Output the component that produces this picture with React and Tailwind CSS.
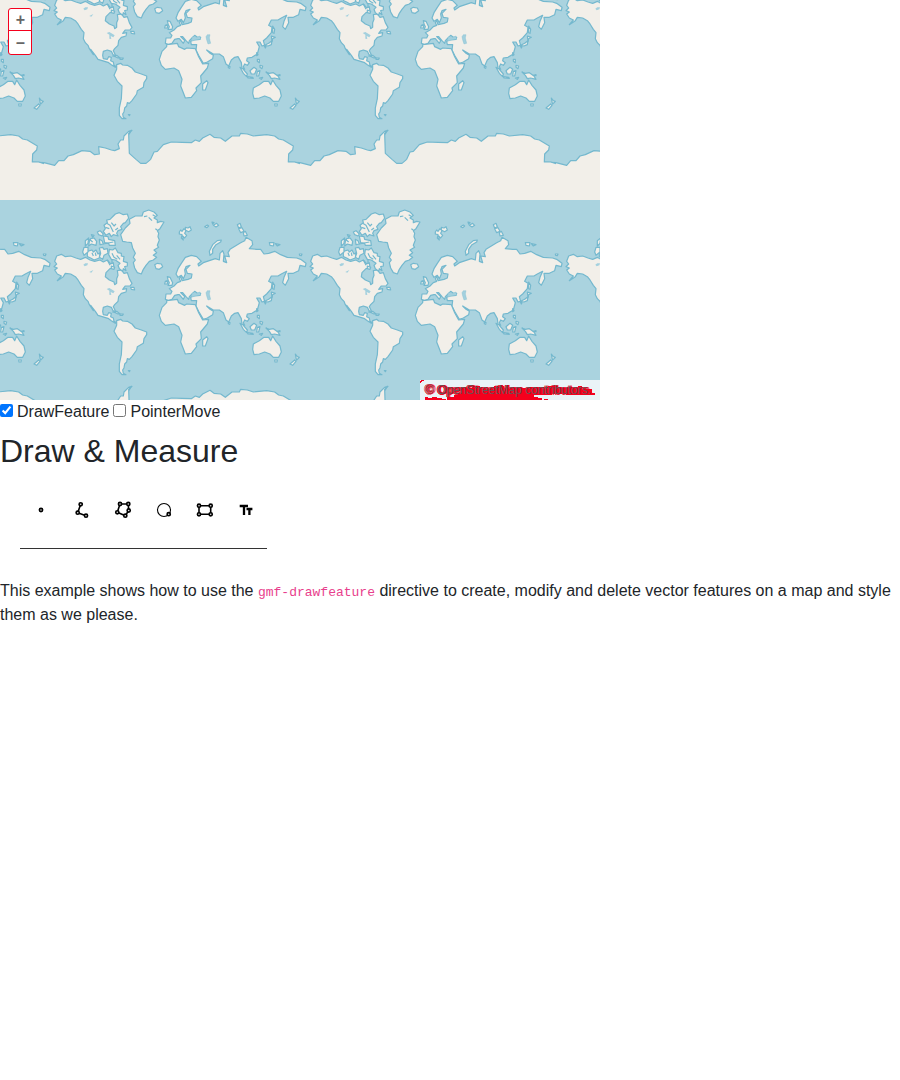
import React from "react";

const NORTH = [
  "M14,184 L20,168 L34,163 L46,170 L62,168 L78,174 L92,178 L106,172 L120,180 L134,184 L150,180 L160,186 L172,180 L182,192 L190,188 L192,204 L180,206 L168,218 L166,230 L178,240 L192,246 L194,254 L200,250 L200,236 L204,226 L202,212 L214,210 L222,220 L232,218 L238,236 L246,250 L240,258 L226,258 L218,268 L230,266 L228,276 L214,280 L206,290 L204,304 L194,314 L190,320 L196,332 L190,334 L184,322 L172,318 L160,322 L158,334 L160,344 L172,346 L176,338 L184,340 L182,350 L190,354 L192,364 L200,368 L196,370 L184,362 L176,356 L164,352 L144,346 L136,334 L122,316 L130,332 L118,314 L114,304 L106,296 L100,284 L102,266 L94,256 L84,240 L76,230 L62,222 L46,220 L40,230 L22,242 L34,228 L22,222 L14,210 L22,204 L12,200 L20,192 Z",
  "M200,362 L212,358 L218,363 L232,364 L246,372 L256,384 L274,390 L290,396 L290,404 L282,416 L280,430 L262,440 L260,450 L246,470 L238,478 L232,476 L230,486 L224,492 L222,504 L218,510 L220,520 L228,524 L216,524 L208,514 L208,492 L214,464 L216,426 L202,412 L192,394 L200,376 Z",
  "M218,124 L212,104 L226,84 L240,70 L238,58 L256,48 L276,48 L280,36 L296,30 L312,36 L322,46 L312,54 L322,60 L322,68 L332,64 L342,66 L330,86 L322,92 L326,100 L324,110 L328,120 L322,136 L326,142 L312,150 L320,158 L310,166 L320,172 L310,180 L298,184 L288,196 L280,208 L274,222 L262,218 L254,204 L250,188 L256,180 L250,172 L256,160 L248,144 L244,128 L230,126 Z",
  "M162,76 L172,68 L170,60 L180,58 L190,48 L196,42 L208,38 L220,44 L232,42 L236,54 L226,68 L220,70 L212,80 L216,88 L204,92 L200,100 L204,108 L190,104 L184,110 L178,100 L168,106 L160,94 L166,86 Z",
  "M178,148 L188,150 L196,144 L204,158 L214,160 L214,168 L222,170 L220,184 L232,188 L232,198 L224,200 L228,212 L220,206 L218,214 L208,206 L204,196 L210,190 L196,180 L184,178 L176,164 Z",
  "M112,154 L126,150 L130,156 L138,150 L144,162 L150,158 L148,174 L132,180 L122,174 L112,170 Z",
  "M102,142 L114,142 L114,156 L102,166 L98,156 Z",
  "M122,116 L132,114 L140,124 L138,136 L124,132 L116,138 L118,124 Z",
  "M106,122 L116,114 L114,130 L106,138 Z",
  "M148,144 L158,142 L162,148 L172,146 L174,160 L162,166 L158,178 L148,172 L152,160 Z",
  "M142,96 L150,92 L160,102 L156,108 L146,104 Z",
  "M160,108 L174,110 L176,118 L194,122 L196,136 L178,136 L176,130 L164,128 Z",
  "M148,118 L156,122 L160,132 L150,134 Z",
  "M124,104 L132,106 L128,112 Z",
  "M184,198 L194,202 L192,208 L184,206 Z",
  "M314,194 L322,190 L334,192 L338,200 L328,208 L318,206 Z",
  "M242,262 L252,262 L254,270 L244,268 Z",
  "M188,336 L200,334 L210,342 L204,342 L196,338 Z",
  "M210,342 L220,342 L218,346 L210,346 Z",
  "M235,512 L240,512 L238,515 Z",
  "M230,570 L240,562 L244,559 L238,570 Z",
];

const EAST = [
  "M46,298 L48,282 L62,282 L66,274 L58,266 L72,258 L82,248 L92,244 L88,236 L92,230 L96,242 L114,238 L124,234 L126,222 L112,220 L108,208 L120,196 L108,200 L104,210 L106,222 L100,236 L94,226 L84,232 L78,222 L84,206 L94,190 L106,172 L124,166 L140,170 L154,184 L144,192 L146,198 L160,188 L178,182 L196,176 L208,180 L210,160 L218,152 L222,162 L220,184 L230,188 L224,168 L238,170 L234,158 L240,148 L256,138 L272,128 L284,122 L288,112 L306,122 L308,134 L298,146 L320,148 L332,148 L342,162 L356,160 L374,154 L392,164 L412,172 L440,174 L452,178 L468,190 L466,200 L450,196 L446,212 L430,220 L414,220 L416,236 L406,256 L398,248 L402,232 L410,214 L394,222 L384,228 L364,228 L356,244 L366,250 L364,266 L350,282 L340,290 L344,304 L336,306 L330,294 L320,294 L328,308 L322,330 L306,340 L292,342 L290,350 L298,356 L292,364 L284,360 L280,368 L284,376 L276,372 L274,356 L264,338 L254,340 L244,348 L236,366 L228,360 L220,338 L208,330 L190,330 L170,318 L180,328 L190,334 L188,344 L172,354 L160,358 L148,338 L138,318 L140,302 L124,302 L122,292 L130,288 L150,286 L152,280 L142,280 L134,274 L126,282 L118,290 L116,298 L108,290 L98,278 L92,278 L104,290 L100,298 L88,284 L84,284 L74,286 L66,298 L56,302 Z",
  "M50,302 L82,298 L86,308 L104,316 L110,312 L136,314 L146,338 L158,360 L176,358 L172,372 L152,396 L154,416 L138,432 L140,440 L124,460 L106,462 L100,446 L92,426 L96,406 L86,380 L72,372 L46,376 L34,364 L28,346 L36,322 L50,308 Z",
  "M310,432 L328,422 L342,412 L356,412 L362,422 L368,408 L378,424 L390,438 L394,456 L386,472 L370,472 L360,462 L344,456 L328,462 L312,464 L308,448 Z",
  "M158,420 L170,410 L174,416 L166,438 L158,438 Z",
  "M374,480 L382,480 L381,486 L375,486 Z",
  "M436,462 L442,470 L448,472 L440,480 L438,474 Z",
  "M434,480 L438,484 L428,496 L420,492 Z",
  "M52,230 L60,232 L68,248 L66,256 L54,256 L58,248 L54,240 Z",
  "M46,244 L52,242 L52,252 L44,252 Z",
  "M180,166 L178,154 L188,134 L202,122 L214,120 L212,126 L198,134 L188,148 L188,160 Z",
  "M88,96 L92,90 L96,94 L102,86 L108,92 L104,100 L110,106 L104,114 L98,108 L100,120 L94,114 L96,104 L88,102 Z",
  "M106,82 L114,84 L120,80 L124,90 L116,95 L106,90 Z",
  "M164,80 L172,75 L176,78 L170,83 Z",
  "M190,76 L200,70 L206,76 L198,81 Z",
  "M186,66 L192,68 L188,72 Z",
  "M262,74 L270,70 L274,80 L266,84 Z",
  "M266,86 L276,83 L282,94 L272,98 Z",
  "M280,98 L286,94 L292,106 L282,108 Z",
  "M358,128 L372,128 L370,138 L360,136 Z",
  "M376,131 L390,134 L382,138 Z",
  "M448,162 L456,162 L454,167 L449,166 Z",
  "M368,246 L374,256 L372,268 L368,266 Z",
  "M364,276 L376,280 L368,284 L366,292 Z",
  "M366,290 L364,302 L354,306 L344,304 L356,298 Z",
  "M342,304 L348,308 L346,312 Z",
  "M270,370 L278,374 L292,390 L290,398 L280,388 Z",
  "M292,398 L308,400 L310,403 L294,402 Z",
  "M300,380 L312,370 L320,376 L314,390 L304,390 Z",
  "M322,382 L330,380 L326,396 L320,396 Z",
  "M322,346 L328,346 L328,356 L322,352 Z",
  "M330,364 L338,366 L336,374 L330,370 Z",
  "M348,384 L358,388 L370,386 L384,396 L390,406 L374,402 L364,404 L358,394 Z",
  "M382,394 L390,392 L390,395 Z",
  "M328,402 L338,400 L334,406 Z",
  "M235,366 L240,368 L239,373 L235,371 Z",
  "M320,326 L324,332 L320,335 Z",
];

const ANTARCTICA_COAST =
  "M96,216 L132,218 L164,226 L176,212 L192,212 L204,198 L220,194 L246,182 L270,184 L284,194 L298,192 L296,170 L316,174 L334,180 L344,182 L358,176 L354,162 L362,150 L370,150 L372,138 L386,124 L396,121 L386,130 L388,190 L408,208 L422,220 L438,220 L452,208 L462,186 L472,184 L490,164 L514,156 L546,157 L574,158 L586,150 L598,154 L608,144 L630,133 L642,142 L662,144 L676,154 L696,138 L718,138 L722,130 L742,132 L760,138 L800,134 L824,138 L836,147 L850,150 L880,168 L878,180 L866,192 L865,216 L884,216 L900,221";
const ANTARCTICA_LAND = ANTARCTICA_COAST + " L900,330 L96,330 Z";

const LAKES = [
  "M100,194 L106,190 L114,190 L112,196 L104,199 Z",
  "M118,216 L130,210 L124,218 Z",
  "M170,267 L178,264 L188,270 L194,274 L190,280 L182,276 L184,285 L178,284 L178,272 Z",
];
const INLAND_SEAS = [
  "M168,278 L172,272 L180,272 L178,282 L182,298 L174,300 L170,288 Z",
  "M124,292 L126,280 L134,276 L140,280 L150,276 L152,286 L136,288 Z",
];
const INLETS =
  "M170,70 L180,76 L190,96 M184,68 L192,78 L198,72 M166,82 L178,86 M204,84 L196,90 M282,50 L292,48 M296,52 L306,62 M308,44 L318,50 M316,86 L322,90 M186,160 L192,172 L202,178 M200,166 L210,178 M126,158 L130,168 M136,158 L138,168 M118,118 L128,126 M160,132 L190,126 M172,180 L180,196 M186,178 L186,192";

function World({ x, y }) {
  return (
    <g transform={`translate(${x} ${y})`}>
      <g fill="#f2efe9" stroke="#74b8ce" strokeWidth="3.6" strokeLinejoin="round">
        <g transform="translate(6 0) scale(0.33333)">
          {NORTH.map((d) => (
            <path key={d} d={d} />
          ))}
          <path d={INLETS} fill="none" />
          <g fill="#a3d0de" stroke="none">
            {LAKES.map((d) => (
              <path key={d} d={d} />
            ))}
          </g>
        </g>
        <g transform="translate(106 0) scale(0.33333)">
          {EAST.map((d) => (
            <path key={d} d={d} />
          ))}
          <g fill="#a3d0de" strokeWidth="1">
            {INLAND_SEAS.map((d) => (
              <path key={d} d={d} />
            ))}
          </g>
        </g>
      </g>
      <g transform="translate(-44 146) scale(0.33333)">
        <path d={ANTARCTICA_LAND} fill="#f2efe9" />
        <path d={ANTARCTICA_COAST} fill="none" stroke="#74b8ce" strokeWidth="3.6" strokeLinejoin="round" />
      </g>
    </g>
  );
}

function MapView() {
  return (
    <div className="relative h-[400px] w-full max-w-[600px] overflow-hidden bg-[#aad3df]">
      <svg
        className="block h-full w-full"
        viewBox="0 0 600 400"
        preserveAspectRatio="xMinYMin slice"
        role="img"
        aria-label="World map"
      >
        {[-56, 200].map((y) =>
          [556, 300, 44, -212].map((x) => <World key={`${x}:${y}`} x={x} y={y} />)
        )}
      </svg>
      <div className="absolute left-2 top-2 flex w-6 flex-col divide-y divide-[#f5001d] overflow-hidden rounded-[3px] border border-[#f5001d] bg-white text-[16px] font-bold leading-none text-[#666]">
        <button type="button" aria-label="Zoom in" className="flex h-[22px] items-center justify-center pl-px">
          +
        </button>
        <button type="button" aria-label="Zoom out" className="flex h-[23px] items-center justify-center pl-px">
          –
        </button>
      </div>
      <div className="absolute bottom-0 right-0 h-5 w-[180px] bg-[#eaf3f7] px-[5px]">
        <svg className="absolute left-0 top-0 h-5 w-[180px]" viewBox="0 0 180 20" aria-hidden="true">
          <path
            d="M27,20 V17 H34 V15 H38 V13 H42 V8 H52 V6 H60 V9 H74 V6 H84 V8 H110 V7 H120 V9 H128 V6 H138 V8 H158 V6 H162 V9 H172 V13 H175 V15 H146 V14 H132 V15 H114 V17 H118 V18 H122 V20 Z M0,1 H1 V0 H4 V1 H2 V2 H1 V3 H0 Z M5,17 H8 V18 H12 V17 H17 V18 H22 V19 H26 V20 H5 Z M124,19 H128 V20 H124 Z"
            fill="#f5001d"
          />
        </svg>
        <a
          href="#copyright"
          className="relative block whitespace-nowrap text-[12px] leading-5 text-[#6a5256] [text-shadow:-1px_0_#f5001d,1px_0_#f5001d,0_1px_#f5001d,2px_0_#f5001d]"
        >
          © OpenStreetMap contributors.
        </a>
      </div>
    </div>
  );
}

function Node({ x, y }) {
  return <circle cx={x} cy={y} r="1.6" fill="#ddd" />;
}

const TOOLS = [
  { name: "Point", path: "", nodes: [[0, 0]] },
  {
    name: "Line",
    path: "M-1.3,-5.7 L-4.3,2.7 L4,5.7",
    nodes: [[-1.3, -5.7], [-4.3, 2.7], [4, 5.7]],
  },
  {
    name: "Polygon",
    path: "M-3,-6 L5.3,-6 L5.7,0.5 L2.3,5.7 L-5.7,2.3 Z",
    nodes: [[-3, -6], [5.3, -6], [5.7, 0.5], [2.3, 5.7], [-5.7, 2.3]],
  },
  { name: "Circle", circle: true, nodes: [[4.7, 4.2]] },
  {
    name: "Rectangle",
    path: "M-6,-4.3 H5.7 V4.3 H-6 Z",
    nodes: [[-6, -4.3], [5.7, -4.3], [5.7, 4.3], [-6, 4.3]],
  },
  { name: "Text", letters: true, nodes: [] },
];

function ToolIcon({ tool }) {
  return (
    <svg className="h-5 w-5" viewBox="-10 -10 20 20" fill="none" stroke="#000" strokeWidth="1.6" aria-hidden="true">
      {tool.path && <path d={tool.path} />}
      {tool.circle && <circle cx="0" cy="0" r="6.5" strokeWidth="1.1" />}
      {tool.letters && (
        <g strokeWidth="2.3">
          <path d="M-6.3,-4 H2 M-2,-4 V5" />
          <path d="M0.5,-1 H6.4 M3.4,-1 V5" />
        </g>
      )}
      {tool.nodes.map(([x, y]) => (
        <Node key={`${x},${y}`} x={x} y={y} />
      ))}
    </svg>
  );
}

export default function App() {
  return (
    <div className="font-['Liberation_Sans',Arial,sans-serif] text-base leading-6 text-[#212529]">
      <MapView />
      <div className="flex flex-wrap gap-1">
        <label className="flex items-center gap-1">
          <input type="checkbox" defaultChecked className="mb-[3px] h-[13px] w-[13px]" />
          DrawFeature
        </label>
        <label className="flex items-center gap-1">
          <input type="checkbox" className="mb-[3px] h-[13px] w-[13px]" />
          PointerMove
        </label>
      </div>
      <h2 className="mb-2 mt-2 text-[32px] font-normal leading-[38px]">Draw &amp; Measure</h2>
      <div className="ml-5 inline-flex border-b border-[#333] pb-[19px] pr-px pt-[13px] align-top">
        {TOOLS.map((tool) => (
          <button
            key={tool.name}
            type="button"
            aria-label={tool.name}
            className="flex h-[38px] w-[41px] items-center justify-center"
          >
            <ToolIcon tool={tool} />
          </button>
        ))}
      </div>
      <p className="mt-[30px]">
        This example shows how to use the{" "}
        <code className="font-['Liberation_Mono',monospace] text-[13px] leading-none text-[#e83e8c]">
          gmf-drawfeature
        </code>{" "}
        directive to create, modify and delete vector features on a map and style them as we please.
      </p>
    </div>
  );
}
